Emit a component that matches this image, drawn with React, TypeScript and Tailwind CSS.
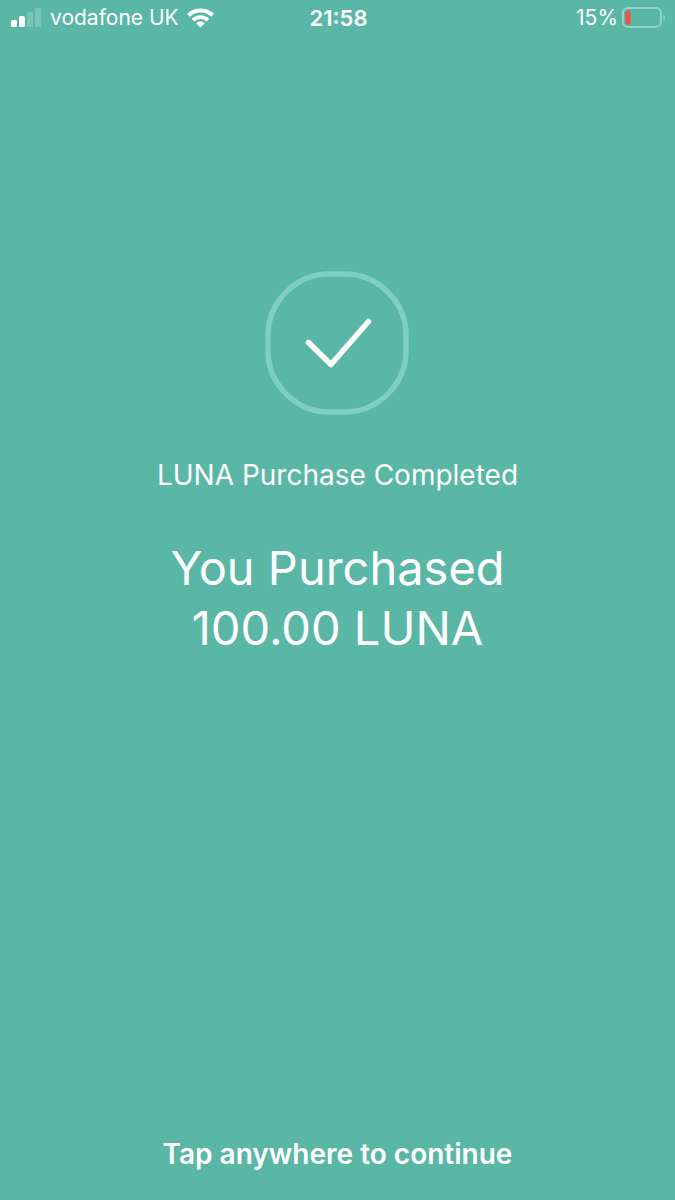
import { FC } from "react";

interface StatusBarProps {
  carrier: string;
  time: string;
  battery: number;
}

const SignalBars = () => (
  <svg width="31" height="20" viewBox="0 0 31 20" fill="white" aria-hidden="true">
    <rect x="0" y="12" width="6" height="7" rx="1.5" />
    <rect x="8" y="8" width="6" height="11" rx="1.5" />
    <rect x="16" y="4" width="6" height="15" rx="1.5" opacity="0.2" />
    <rect x="24" y="0" width="6" height="19" rx="1.5" opacity="0.2" />
  </svg>
);

const Wifi = () => (
  <svg width="27" height="20" viewBox="0 0 27 20" fill="none" aria-hidden="true">
    <path d="M1.4 7.2C8.2 0.8 18.8 0.8 25.6 7.2" stroke="white" strokeWidth="4" />
    <path d="M6 12.2C10.3 8.2 16.7 8.2 21 12.2" stroke="white" strokeWidth="3.8" />
    <path d="M13.5 19.6L9.2 15.3C11.6 13 15.4 13 17.8 15.3Z" fill="white" />
  </svg>
);

const Battery: FC<{ level: number }> = ({ level }) => (
  <svg width="44" height="22" viewBox="0 0 44 22" fill="none" aria-hidden="true">
    <rect x="1" y="1" width="38" height="19" rx="5" stroke="#90d5c7" strokeWidth="2" />
    <path d="M41.5 7.5C43.6 8.4 43.6 12.6 41.5 13.5Z" fill="#90d5c7" />
    <rect x="3.5" y="3.5" width={(level / 100) * 34} height="14" rx="2" fill="#f0524a" />
  </svg>
);

const StatusBar: FC<StatusBarProps> = ({ carrier, time, battery }) => {
  return (
    <header className="grid grid-cols-[1fr_auto_1fr] items-center h-9 pl-[11px] pr-[9px] text-[21px] leading-7">
      <div className="flex items-center gap-2">
        <SignalBars />
        <span>{carrier}</span>
        <Wifi />
      </div>
      <time className="text-[22px] font-semibold">{time}</time>
      <div className="flex items-center justify-end gap-1">
        <span>{battery}%</span>
        <Battery level={battery} />
      </div>
    </header>
  );
};

const CheckBadge = () => (
  <svg width="145" height="144" viewBox="0 0 145 144" fill="none" aria-hidden="true">
    <path
      d="M64 3H80C113 3 141 31 141 64V80C141 113 113 141 80 141H64C31 141 3 113 3 80V64C3 31 31 3 64 3Z"
      stroke="#7fcfbf"
      strokeWidth="5.5"
    />
    <path
      d="M43.5 71.5L66 93.5L103.5 50.5"
      stroke="white"
      strokeWidth="5.5"
      strokeLinecap="round"
      strokeLinejoin="round"
    />
  </svg>
);

const App = () => {
  return (
    <div className="min-h-screen flex flex-col bg-[#5ab7a5] text-white font-['Inter',sans-serif]">
      <StatusBar carrier="vodafone UK" time="21:58" battery={15} />
      <main className="grow flex flex-col items-center pt-[235px] text-center">
        <CheckBadge />
        <p className="mt-10 text-[28px] leading-10">LUNA Purchase Completed</p>
        <h1 className="mt-[43px] text-[47px] leading-[60px]">
          You Purchased
          <br />
          100.00 LUNA
        </h1>
      </main>
      <button
        type="button"
        className="w-full py-[26px] text-[28px] leading-10 font-semibold cursor-pointer"
      >
        Tap anywhere to continue
      </button>
    </div>
  );
};

export default App;
